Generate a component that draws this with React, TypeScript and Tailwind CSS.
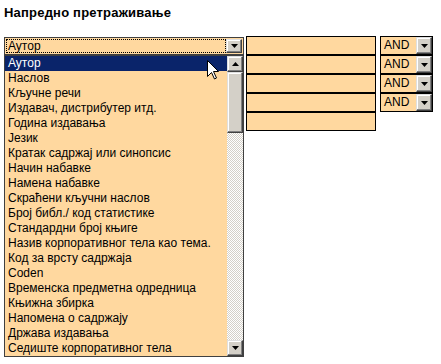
import React from 'react';

const fields = [
  'Аутор',
  'Наслов',
  'Кључне речи',
  'Издавач, дистрибутер итд.',
  'Година издавања',
  'Језик',
  'Кратак садржај или синопсис',
  'Начин набавке',
  'Намена набавке',
  'Скраћени кључни наслов',
  'Број библ./ код статистике',
  'Стандардни број књиге',
  'Назив корпоративног тела као тема.',
  'Код за врсту садржаја',
  'Coden',
  'Временска предметна одредница',
  'Књижна збирка',
  'Напомена о садржају',
  'Држава издавања',
  'Седиште корпоративног тела',
];

const ArrowBtn: React.FC<{ up?: boolean }> = ({ up }) => (
  <div className="w-4 h-full flex items-center justify-center bg-[#d4d0c8] border border-t-[#dfdfdf] border-l-[#dfdfdf] border-b-[#404040] border-r-[#404040] shadow-[inset_-1px_-1px_#808080,inset_1px_1px_#ffffff]">
    <svg width="7" height="4" viewBox="0 0 7 4">
      {up ? <path d="M3.5 0 L7 4 L0 4 Z" fill="#000" /> : <path d="M0 0 L7 0 L3.5 4 Z" fill="#000" />}
    </svg>
  </div>
);

const AndSelect = () => (
  <div className="h-[19px] flex border border-black bg-[#ffd89f]">
    <span className="flex-1 pl-[3px] text-[12px] leading-[17px] text-black">AND</span>
    <div className="h-[17px]">
      <ArrowBtn />
    </div>
  </div>
);

export default function App() {
  return (
    <div className="relative w-[441px] h-[364px] bg-white text-black font-['Liberation_Sans',Arial,sans-serif] overflow-hidden">
      <h1 className="pl-[4px] pt-[6px] text-[13px] leading-[14px] font-bold tracking-[0.2px]">
        Напредно претраживање
      </h1>
      <div className="flex pl-[4px] pt-[16px] items-start">
        {/* field select with open list */}
        <div className="w-[240px] flex flex-col">
          <div className="mt-px h-[18px] flex border border-[#404040] bg-[#ffd89f] p-px">
            <div className="flex-1 border border-dotted border-black text-[12px] leading-[12px] pl-[1px]">Аутор</div>
            <div className="h-[14px]">
              <ArrowBtn />
            </div>
          </div>
          <div className="h-[302px] flex border border-[#404040] bg-[#ffd89f]">
            <ul className="flex-1 overflow-hidden">
              {fields.map((f, i) => (
                <li
                  key={f}
                  className={`h-[15px] pl-[3px] text-[12px] leading-[15px] whitespace-nowrap ${
                    i === 0 ? 'bg-[#0a246a] text-white' : ''
                  }`}
                >
                  {f}
                </li>
              ))}
            </ul>
            <div className="w-4 flex flex-col bg-[repeating-conic-gradient(#d4d0c8_0%_25%,#ffffff_0%_50%)] bg-[length:2px_2px]">
              <div className="h-4">
                <ArrowBtn up />
              </div>
              <div className="h-[61px] bg-[#d4d0c8] border border-t-[#dfdfdf] border-l-[#dfdfdf] border-b-[#404040] border-r-[#404040] shadow-[inset_-1px_-1px_#808080,inset_1px_1px_#ffffff]" />
              <div className="flex-1" />
              <div className="h-4">
                <ArrowBtn />
              </div>
            </div>
          </div>
        </div>

        {/* value inputs */}
        <div className="w-[130px] ml-[2px] flex flex-col">
          {[0, 1, 2, 3, 4].map((i) => (
            <div key={i} className="h-[19px] border border-black bg-[#ffd89f]" />
          ))}
        </div>

        {/* operators */}
        <div className="w-[53px] ml-[4px] flex flex-col">
          {[0, 1, 2, 3].map((i) => (
            <AndSelect key={i} />
          ))}
        </div>
      </div>

      {/* mouse pointer */}
      <svg className="absolute left-[207px] top-[60px]" width="13" height="20" viewBox="0 0 13 20">
        <path d="M0.5 0.5 L0.5 16.5 L4.5 12.5 L7.5 19 L9.5 18 L6.5 11.5 L11.5 11.5 Z" fill="#fff" stroke="#000" strokeWidth="1" />
      </svg>
    </div>
  );
}
